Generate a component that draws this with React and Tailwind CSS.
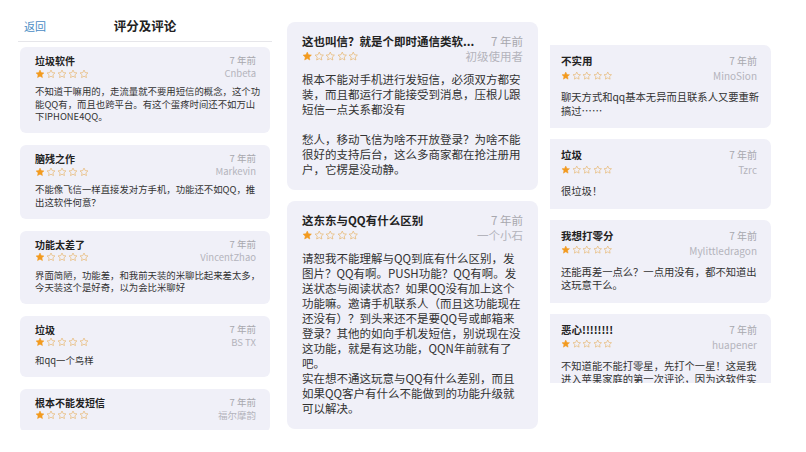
import React from 'react';

const STAR = 'M12 2.5l2.9 6.1 6.6.8-4.9 4.6 1.3 6.6L12 17.3l-5.9 3.3 1.3-6.6-4.9-4.6 6.6-.8z';

function Stars({ size }) {
  return (
    <div className="flex items-center gap-[1px]">
      {[0, 1, 2, 3, 4].map((i) => (
        <svg key={i} width={size} height={size} viewBox="0 0 24 24">
          {i === 0 ? (
            <path d={STAR} fill="#f29a1f" stroke="#f29a1f" strokeWidth="1.2" strokeLinejoin="round" />
          ) : (
            <path d={STAR} fill="none" stroke="#e7b46a" strokeWidth="1.6" strokeLinejoin="round" />
          )}
        </svg>
      ))}
    </div>
  );
}

const leftReviews = [
  {
    title: '垃圾软件',
    user: 'Cnbeta',
    lines: ['不知道干嘛用的，走流量就不要用短信的概念，这个功', '能QQ有，而且也跨平台。有这个蛋疼时间还不如万山', '下IPHONE4QQ。'],
  },
  { title: '脑残之作', user: 'Markevin', lines: ['不能像飞信一样直接发对方手机，功能还不如QQ，推', '出这软件何意？'] },
  { title: '功能太差了', user: 'VincentZhao', lines: ['界面简陋，功能差，和我前天装的米聊比起来差太多，', '今天装这个是好奇，以为会比米聊好'] },
  { title: '垃圾', user: 'BS TX', lines: ['和qq一个鸟样'] },
  { title: '根本不能发短信', user: '福尔摩韵', lines: [] },
];

const midReviews = [
  {
    title: '这也叫信？就是个即时通信类软...',
    user: '初级使用者',
    lines: [
      '根本不能对手机进行发短信，必须双方都安',
      '装，而且都运行才能接受到消息，压根儿跟',
      '短信一点关系都没有',
      '',
      '愁人，移动飞信为啥不开放登录？为啥不能',
      '很好的支持后台，这么多商家都在抢注册用',
      '户，它楞是没动静。',
    ],
  },
  {
    title: '这东东与QQ有什么区别',
    user: '一个小石',
    lines: [
      '请恕我不能理解与QQ到底有什么区别，发',
      '图片？QQ有啊。PUSH功能？QQ有啊。发',
      '送状态与阅读状态？如果QQ没有加上这个',
      '功能嘛。邀请手机联系人（而且这功能现在',
      '还没有）？到头来还不是要QQ号或邮箱来',
      '登录？其他的如向手机发短信，别说现在没',
      '这功能，就是有这功能，QQN年前就有了',
      '吧。',
      '实在想不通这玩意与QQ有什么差别，而且',
      '如果QQ客户有什么不能做到的功能升级就',
      '可以解决。',
    ],
  },
];

const rightReviews = [
  { title: '不实用', user: 'MinoSion', lines: ['聊天方式和qq基本无异而且联系人又要重新', '搞过……'] },
  { title: '垃圾', user: 'Tzrc', lines: ['很垃圾！'] },
  { title: '我想打零分', user: 'Mylittledragon', lines: ['还能再差一点么？一点用没有，都不知道出', '这玩意干么。'] },
  { title: '恶心!!!!!!!!', user: 'huapener', lines: ['不知道能不能打零星，先打个一星！这是我', '进入苹果家庭的第一次评论，因为这软件实'] },
];

function Lines({ lines }) {
  return lines.map((l, i) => (
    <div key={i} className="whitespace-nowrap">
      {l || '\u00a0'}
    </div>
  ));
}

function LeftCard({ r }) {
  return (
    <div className="mx-[2px] rounded-[6px] bg-[#f0f0f8] pl-[15px] pr-[14px] pt-[7px] pb-[10px]">
      <div className="flex items-center justify-between leading-[13px]">
        <span className="text-[10px] font-semibold text-[#222]">{r.title}</span>
        <span className="text-[9.5px] text-[#a8a8ae]">7 年前</span>
      </div>
      <div className="flex items-center justify-between h-[13px]">
        <Stars size={10} />
        <span className="text-[9.5px] text-[#b4b4bc]">{r.user}</span>
      </div>
      {r.lines.length > 0 && (
        <div className="mt-[5px] text-[9.4px] leading-[12.7px] text-[#333]">
          <Lines lines={r.lines} />
        </div>
      )}
    </div>
  );
}

function MidCard({ r }) {
  return (
    <div className="rounded-[8px] bg-[#f0f0f8] px-[15px] pt-[11px] pb-[13px]">
      <div className="flex items-center justify-between leading-[16px]">
        <span className="text-[11.5px] font-semibold text-[#222]">{r.title}</span>
        <span className="text-[11.5px] text-[#a8a8ae]">7 年前</span>
      </div>
      <div className="flex items-center justify-between h-[15px]">
        <Stars size={10.5} />
        <span className="text-[11.5px] text-[#b4b4bc]">{r.user}</span>
      </div>
      <div className="mt-[8px] text-[11.5px] leading-[15px] text-[#333]">
        <Lines lines={r.lines} />
      </div>
    </div>
  );
}

function RightCard({ r }) {
  return (
    <div className="rounded-r-[7px] bg-[#f0f0f8] pl-[11px] pr-[14px] pt-[9px] pb-[11px]">
      <div className="flex items-center justify-between leading-[14px]">
        <span className="text-[10.5px] font-semibold text-[#222]">{r.title}</span>
        <span className="text-[10px] text-[#a8a8ae]">7 年前</span>
      </div>
      <div className="flex items-center justify-between h-[15px]">
        <Stars size={9.5} />
        <span className="text-[10px] text-[#b4b4bc]">{r.user}</span>
      </div>
      <div className="mt-[7px] text-[10.3px] leading-[13.5px] text-[#333]">
        <Lines lines={r.lines} />
      </div>
    </div>
  );
}

export default function App() {
  return (
    <div className="w-[806px] h-[452px] overflow-hidden bg-white flex items-start pl-[18px] font-['Noto_Sans_CJK_SC',sans-serif]">
      <div className="w-[254px] h-[418px] mt-[12px] overflow-hidden">
        <div className="relative h-[30px] flex items-center justify-center border-b border-[#e6e6ea]">
          <span className="absolute left-[6px] text-[11px] text-[#4a8cc4]">返回</span>
          <span className="text-[12.5px] font-bold text-[#222]">评分及评论</span>
        </div>
        <div className="mt-[5px] flex flex-col gap-[12px]">
          {leftReviews.map((r, i) => (
            <LeftCard key={i} r={r} />
          ))}
        </div>
      </div>

      <div className="w-[251px] ml-[15px] mt-[22px] flex flex-col gap-[11px]">
        {midReviews.map((r, i) => (
          <MidCard key={i} r={r} />
        ))}
      </div>

      <div className="w-[221px] ml-[12px] mt-[45px] h-[338px] overflow-hidden flex flex-col gap-[11px]">
        {rightReviews.map((r, i) => (
          <div key={i} className="shrink-0">
            <RightCard r={r} />
          </div>
        ))}
      </div>
    </div>
  );
}
